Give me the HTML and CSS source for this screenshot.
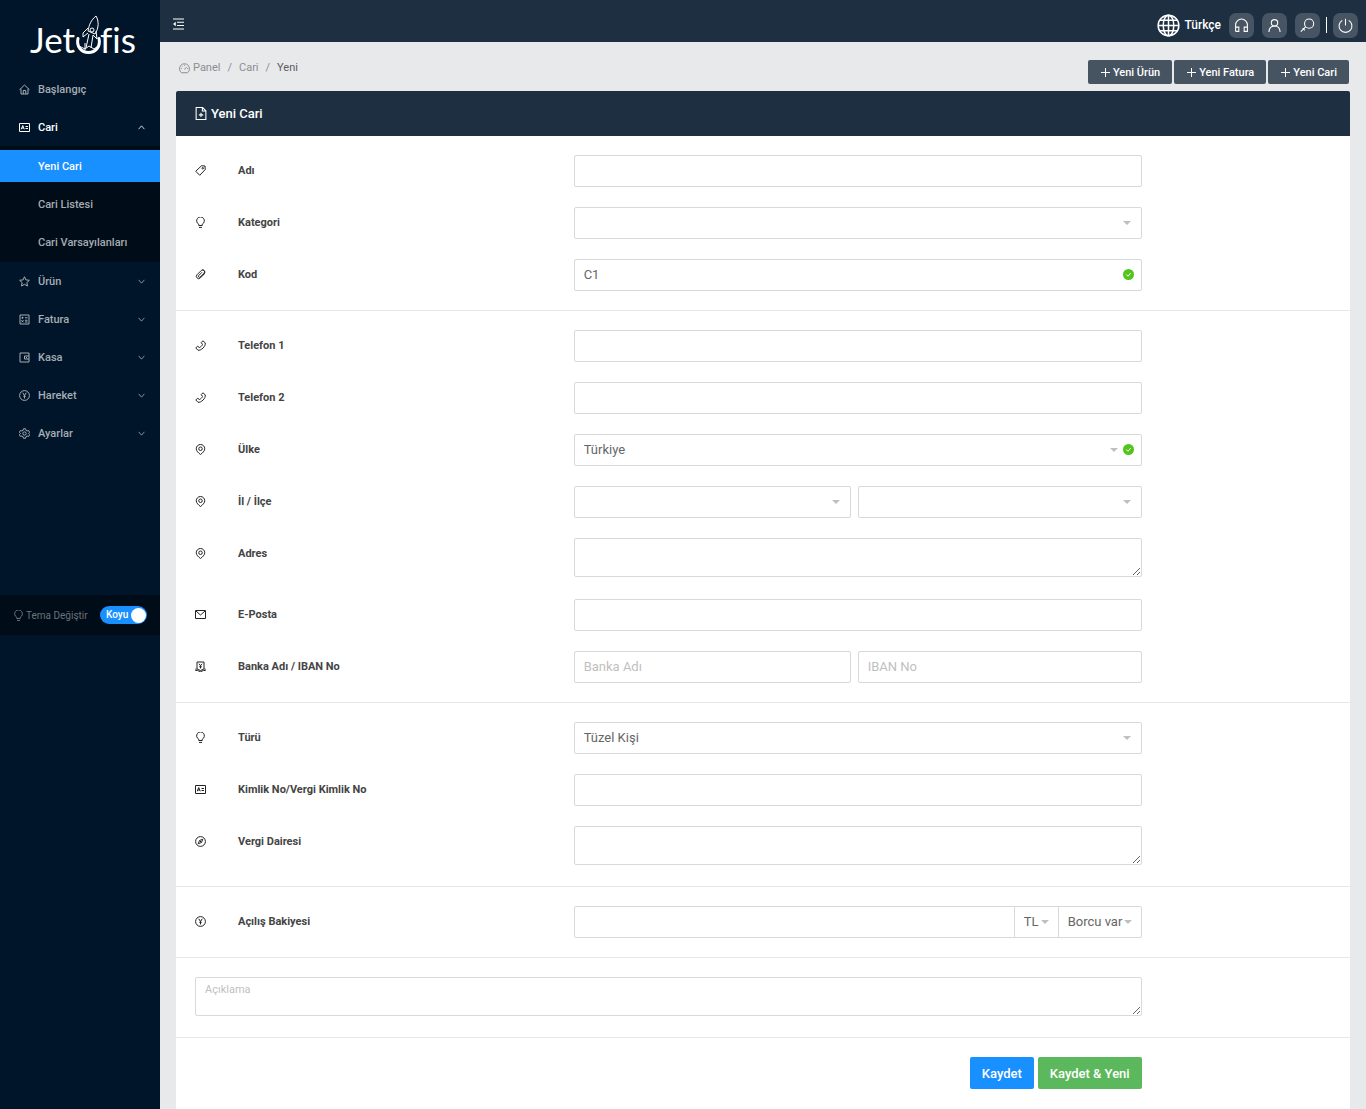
FILE: index.html
```html
<!DOCTYPE html>
<html lang="tr">
<head>
<meta charset="utf-8">
<meta name="viewport" content="width=device-width, initial-scale=1">
<title>Jetofis - Yeni Cari</title>
<link rel="stylesheet" href="styles.css">
</head>
<body>
<svg class="sprite" aria-hidden="true">
  <symbol id="i-home" viewBox="0 0 22 22"><path d="M1 11.500 11 2l10 9.500M4 9.500V20h14V9.500M8.500 20v-7h5v7"/></symbol>
  <symbol id="i-idcard" viewBox="0 0 22 22"><path d="M1 3h20v16H1zM4.500 14.500 7.500 7l3 7.500M5.500 12h4M13 9h5M13 13h5"/></symbol>
  <symbol id="i-star" viewBox="0 0 22 22"><path d="m11 1.500 2.900 6.300 6.800.8-5 4.700 1.300 6.700-6-3.300L5 20l1.300-6.700-5-4.700 6.800-.8z"/></symbol>
  <symbol id="i-sheet" viewBox="0 0 22 22"><path d="M2 2h18v18H2zM5 7.500h4M7 5.500v4M5 12.500l4 4M9 12.500l-4 4M12 7.500h5M12 12.500h5M12 16h5"/></symbol>
  <symbol id="i-wallet" viewBox="0 0 22 22"><path d="M2 2h18v18H2zM20 8h-9v6h9M14 11h2"/></symbol>
  <symbol id="i-yen" viewBox="0 0 22 22"><circle cx="11" cy="11" r="9.800"/><path d="m7.500 5.500 3.500 5.500 3.500-5.500M11 11v6M8.500 12.500h5"/></symbol>
  <symbol id="i-gear" viewBox="0 0 22 22"><path d="M9 1.500h4l.8 3 2.500 1.400 3-.8 2 3.500-2.200 2.400 2.200 2.400-2 3.500-3-.8-2.500 1.400-.8 3H9l-.8-3-2.500-1.400-3 .8-2-3.500L2.900 11 .7 8.600l2-3.500 3 .8 2.500-1.400z"/><circle cx="11" cy="11" r="3.300"/></symbol>
  <symbol id="i-down" viewBox="0 0 22 22"><path d="m4 7 7 8 7-8"/></symbol>
  <symbol id="i-up" viewBox="0 0 22 22"><path d="m4 15 7-8 7 8"/></symbol>
  <symbol id="i-bulb" viewBox="0 0 22 22"><path d="M7.500 17v-2.600a7.700 7.700 0 1 1 7 0V17zM8 20.800h6"/></symbol>
  <symbol id="i-tag" viewBox="0 0 22 22"><path d="m13 1.500 7 .5.500 7L9.500 20.500l-8-8z"/><circle cx="15.500" cy="6.500" r="1.500"/></symbol>
  <symbol id="i-clip" viewBox="0 0 22 22"><path d="m18.500 10-8 8a4.600 4.600 0 0 1-6.500-6.500l8.500-8.500a3.600 3.600 0 0 1 5.500 5.500l-7.500 7.500a2 2 0 0 1-3-3l6.500-6.500M15.500 12.500l4-4.500a4.600 4.600 0 0 0-5-6"/></symbol>
  <symbol id="i-phone" viewBox="0 0 22 22"><path d="m16 1.500 4.500 4.500c.5 3.500-1.200 7-4.500 10.200S9 21 6 20.500L1.500 16 5 12.500l4 2.500c3-1.500 4.800-3.500 6-6L12.500 5z"/></symbol>
  <symbol id="i-pin" viewBox="0 0 22 22"><path d="M11 21c-4-3-8.500-7-8.500-11.500a8.500 8.500 0 0 1 17 0C19.500 14 15 18 11 21z"/><circle cx="11" cy="9.500" r="3.500"/></symbol>
  <symbol id="i-mail" viewBox="0 0 22 22"><path d="M1 3h20v16H1zM2 4l9 8 9-8"/></symbol>
  <symbol id="i-bank" viewBox="0 0 22 22"><path d="M4 2h14v14l-7 3-7-3zM1 19h4l6 2.500 6-2.500h4M2 15v4M20 15v4M8 5.500l3 4 3-4M11 9.500V15M8.500 11.500h5"/></symbol>
  <symbol id="i-compass" viewBox="0 0 22 22"><circle cx="11" cy="11" r="9.800"/><path d="m15.500 6.500-2.500 6.500-6.500 2.500L9 9zM9.500 9.500l3 3"/></symbol>
  <symbol id="i-dash" viewBox="0 0 22 22"><path d="M5 19.500a10 10 0 1 1 12 0zM11 13l4-5M11 3.500v2M3.500 11h2M16.500 11h2M6 6l1 1"/></symbol>
  <symbol id="i-fileadd" viewBox="0 0 22 24"><path d="M2 1h12l6 6v16H2zM13.500 1v6.500H20M11 10.500v8M7 14.500h8"/></symbol>
  <symbol id="i-plus" viewBox="0 0 22 22"><path d="M11 2v18M2 11h18"/></symbol>
  <symbol id="i-headset" viewBox="0 0 28 28"><path d="M3 25V13a11 11 0 0 1 22 0v12h-6v-8h6M3 17h6v8H3"/></symbol>
  <symbol id="i-user" viewBox="0 0 28 28"><circle cx="14" cy="9" r="6"/><path d="M3.500 26c.5-6.500 4.500-11 10.500-11s10 4.500 10.500 11"/></symbol>
  <symbol id="i-search" viewBox="0 0 28 28"><circle cx="17" cy="10.500" r="8.500"/><path d="m10.500 16.500-9 9M5 19l4 4"/></symbol>
  <symbol id="i-power" viewBox="0 0 28 28"><path d="M8 4.500a12 12 0 1 0 12 0M14 1.500V14"/></symbol>
  <symbol id="i-globe" viewBox="0 0 24 24"><circle cx="12" cy="12" r="10.800"/><ellipse cx="12" cy="12" rx="5.500" ry="10.800"/><path d="M12 1v22M1 12h22M3 6.500h18M3 17.500h18"/></symbol>
  <symbol id="i-fold" viewBox="0 0 24 24"><path d="M1 2h22M9 8.500h14M9 15h14M1 22h22"/><path class="solid" d="M6.500 7.500v9L1 12z"/></symbol>
  <symbol id="i-check" viewBox="0 0 22 22"><circle class="dot" cx="11" cy="11" r="11"/><path class="tick" d="m6.500 11 3.500 3.500 5.500-6.500"/></symbol>
</svg>

<div class="layout">
  <aside class="sidebar">
    <a class="logo" href="#" aria-label="Jetofis">
      <svg class="logo-art" width="104" height="46" viewBox="0 0 104 46" aria-hidden="true">
        <text class="logo-text" x="2" y="38">Jet</text>
        <text class="logo-text" x="72" y="38">fis</text>
        <path class="logo-hull" d="M50 23.500c-2 8 3.500 14 10.500 14s12.500-6 10.500-14"/>
        <path class="logo-line" d="M68 1c-5 4-7 9-8 15l7 3c4-6 4-13 1-18zM60 13l-5 5v4l5-4M68 16l1 8-4-4M61 19l-3 14M65 20l-2 13M51 31l6 3 4-3 5 3 4-3M57 28v7"/>
        <circle class="logo-line" cx="64" cy="15" r="2"/>
      </svg>
    </a>
    <nav class="menu">
      <a class="menu-item" href="#"><svg class="icon"><use href="#i-home"/></svg><span>Başlangıç</span></a>
      <a class="menu-item is-open" href="#"><svg class="icon"><use href="#i-idcard"/></svg><span>Cari</span><svg class="icon chevron"><use href="#i-up"/></svg></a>
      <div class="submenu">
        <a class="submenu-item is-active" href="#">Yeni Cari</a>
        <a class="submenu-item" href="#">Cari Listesi</a>
        <a class="submenu-item" href="#">Cari Varsayılanları</a>
      </div>
      <a class="menu-item" href="#"><svg class="icon"><use href="#i-star"/></svg><span>Ürün</span><svg class="icon chevron"><use href="#i-down"/></svg></a>
      <a class="menu-item" href="#"><svg class="icon"><use href="#i-sheet"/></svg><span>Fatura</span><svg class="icon chevron"><use href="#i-down"/></svg></a>
      <a class="menu-item" href="#"><svg class="icon"><use href="#i-wallet"/></svg><span>Kasa</span><svg class="icon chevron"><use href="#i-down"/></svg></a>
      <a class="menu-item" href="#"><svg class="icon"><use href="#i-yen"/></svg><span>Hareket</span><svg class="icon chevron"><use href="#i-down"/></svg></a>
      <a class="menu-item" href="#"><svg class="icon"><use href="#i-gear"/></svg><span>Ayarlar</span><svg class="icon chevron"><use href="#i-down"/></svg></a>
    </nav>
    <div class="theme">
      <svg class="icon"><use href="#i-bulb"/></svg>
      <label class="theme-label" for="theme">Tema Değiştir</label>
      <span class="switch"><input id="theme" type="checkbox" role="switch" checked><span class="switch-text">Koyu</span></span>
    </div>
  </aside>

  <div class="main">
    <header class="topbar">
      <button class="fold" type="button" aria-label="Menü"><svg class="icon"><use href="#i-fold"/></svg></button>
      <div class="tools">
        <a class="language" href="#"><svg class="icon"><use href="#i-globe"/></svg>Türkçe</a>
        <button class="tool" type="button" aria-label="Destek"><svg class="icon"><use href="#i-headset"/></svg></button>
        <button class="tool" type="button" aria-label="Hesap"><svg class="icon"><use href="#i-user"/></svg></button>
        <button class="tool" type="button" aria-label="Ara"><svg class="icon"><use href="#i-search"/></svg></button>
        <span class="tool-split"></span>
        <button class="tool" type="button" aria-label="Çıkış"><svg class="icon"><use href="#i-power"/></svg></button>
      </div>
    </header>

    <main class="content">
      <div class="page-head">
        <nav class="breadcrumb">
          <a href="#"><svg class="icon"><use href="#i-dash"/></svg>Panel</a><span>/</span><a href="#">Cari</a><span>/</span><span class="current">Yeni</span>
        </nav>
        <div class="shortcuts">
          <button class="shortcut" type="button"><svg class="icon"><use href="#i-plus"/></svg>Yeni Ürün</button>
          <button class="shortcut" type="button"><svg class="icon"><use href="#i-plus"/></svg>Yeni Fatura</button>
          <button class="shortcut" type="button"><svg class="icon"><use href="#i-plus"/></svg>Yeni Cari</button>
        </div>
      </div>

      <form class="card">
        <h1 class="card-title"><svg class="icon"><use href="#i-fileadd"/></svg>Yeni Cari</h1>

        <section class="section">
          <div class="row"><label class="label" for="adi"><svg class="icon"><use href="#i-tag"/></svg>Adı</label><input class="control" id="adi" type="text"></div>
          <div class="row"><label class="label" for="kategori"><svg class="icon"><use href="#i-bulb"/></svg>Kategori</label><div class="select"><select class="control" id="kategori"><option></option></select></div></div>
          <div class="row"><label class="label" for="kod"><svg class="icon"><use href="#i-clip"/></svg>Kod</label><div class="valid"><input class="control" id="kod" type="text" value="C1"><svg class="icon check"><use href="#i-check"/></svg></div></div>
        </section>

        <section class="section">
          <div class="row"><label class="label" for="tel1"><svg class="icon"><use href="#i-phone"/></svg>Telefon 1</label><input class="control" id="tel1" type="tel"></div>
          <div class="row"><label class="label" for="tel2"><svg class="icon"><use href="#i-phone"/></svg>Telefon 2</label><input class="control" id="tel2" type="tel"></div>
          <div class="row"><label class="label" for="ulke"><svg class="icon"><use href="#i-pin"/></svg>Ülke</label><div class="select valid"><select class="control" id="ulke"><option>Türkiye</option></select><svg class="icon check"><use href="#i-check"/></svg></div></div>
          <div class="row"><label class="label" for="il"><svg class="icon"><use href="#i-pin"/></svg>İl / İlçe</label>
            <div class="pair"><div class="select"><select class="control" id="il"><option></option></select></div><div class="select"><select class="control" id="ilce" aria-label="İlçe"><option></option></select></div></div></div>
          <div class="row row-tall"><label class="label" for="adres"><svg class="icon"><use href="#i-pin"/></svg>Adres</label><textarea class="control" id="adres"></textarea></div>
          <div class="row"><label class="label" for="eposta"><svg class="icon"><use href="#i-mail"/></svg>E-Posta</label><input class="control" id="eposta" type="email"></div>
          <div class="row"><label class="label" for="banka"><svg class="icon"><use href="#i-bank"/></svg>Banka Adı / IBAN No</label>
            <div class="pair"><input class="control" id="banka" type="text" placeholder="Banka Adı"><input class="control" type="text" aria-label="IBAN No" placeholder="IBAN No"></div></div>
        </section>

        <section class="section">
          <div class="row"><label class="label" for="turu"><svg class="icon"><use href="#i-bulb"/></svg>Türü</label><div class="select"><select class="control" id="turu"><option>Tüzel Kişi</option></select></div></div>
          <div class="row"><label class="label" for="kimlik"><svg class="icon"><use href="#i-idcard"/></svg>Kimlik No/Vergi Kimlik No</label><input class="control" id="kimlik" type="text"></div>
          <div class="row row-tall"><label class="label" for="vergi"><svg class="icon"><use href="#i-compass"/></svg>Vergi Dairesi</label><textarea class="control" id="vergi"></textarea></div>
        </section>

        <section class="section">
          <div class="row"><label class="label" for="bakiye"><svg class="icon"><use href="#i-yen"/></svg>Açılış Bakiyesi</label>
            <div class="group">
              <input class="control" id="bakiye" type="text">
              <div class="select currency"><select class="control" aria-label="Para birimi"><option>TL</option></select></div>
              <div class="select side"><select class="control" aria-label="Borç durumu"><option>Borcu var</option></select></div>
            </div></div>
        </section>

        <section class="section">
          <div class="row row-tall"><textarea class="control note" aria-label="Açıklama" placeholder="Açıklama"></textarea></div>
        </section>

        <section class="section">
          <div class="row"><div class="actions"><button class="btn btn-primary" type="submit">Kaydet</button><button class="btn btn-success" type="button">Kaydet &amp; Yeni</button></div></div>
        </section>
      </form>
    </main>
  </div>
</div>
</body>
</html>
```
FILE: styles.css
```css
* { box-sizing: border-box; }
body { margin: 0; background: #e8e9eb; font-family: Roboto, "Liberation Sans", sans-serif; font-size: 11px; color: #333; }
a { color: inherit; text-decoration: none; }
button, input, select, textarea { font-family: inherit; margin: 0; }
button { border: 0; padding: 0; cursor: pointer; }

.sprite { position: absolute; width: 0; height: 0; }
.icon { width: 11px; height: 11px; flex: none; fill: none; stroke: currentColor; stroke-width: 2; }
.solid { fill: currentColor; stroke: none; }

.layout { display: flex; min-height: 100vh; }

/* Sidebar */
.sidebar { width: 160px; flex: none; background: #001529; color: #a6adb4; }
.logo { display: flex; height: 70px; padding: 15px 0 0 28px; color: #fff; }
.logo-art { overflow: visible; }
.logo-text { font-family: Lato, sans-serif; font-size: 35px; fill: #fff; }
.logo-hull { fill: none; stroke: #fff; stroke-width: 3; stroke-linecap: round; }
.logo-line { fill: none; stroke: #fff; stroke-width: 1; }
.menu { font-weight: 500; }
.menu-item { display: flex; align-items: center; gap: 8px; height: 38px; padding: 0 14px 0 19px; }
.menu-item.is-open { color: #fff; }
.chevron { width: 9px; height: 9px; margin-left: auto; }
.submenu { display: flex; flex-direction: column; gap: 6px; padding: 4px 0; background: #000c17; }
.submenu-item { height: 32px; padding-left: 38px; line-height: 33px; }
.submenu-item.is-active { background: #1890ff; color: #fff; }
.theme { display: flex; align-items: center; height: 40px; margin-top: 143px; padding: 0 13px; background: #000c17; font-size: 10px; color: #6b737a; }
.theme-label { margin-left: 2px; }
.switch { display: grid; width: 47px; height: 18px; margin-left: auto; }
.switch > * { grid-area: 1 / 1; }
.switch input { appearance: none; display: flex; align-items: center; justify-content: flex-end; padding: 0 1px; border-radius: 9px; background: #1890ff; }
.switch input::before { content: ""; width: 15px; height: 15px; border-radius: 50%; background: #fff; }
.switch input:not(:checked) { background: #8c8c8c; justify-content: flex-start; }
.switch-text { padding-left: 6px; line-height: 18px; color: #fff; font-weight: 500; pointer-events: none; }

/* Top bar */
.main { flex: 1; min-width: 0; display: flex; flex-direction: column; }
.topbar { display: flex; align-items: center; justify-content: space-between; height: 42px; padding: 6px 8px 0 12px; background: #1e2f41; color: #fff; }
.fold { display: flex; background: none; color: inherit; }
.fold .icon { width: 13px; height: 12px; }
.tools { display: flex; align-items: center; gap: 8px; padding-top: 2px; }
.language { display: flex; align-items: center; gap: 4px; font-size: 12px; font-weight: 500; }
.language .icon { width: 23px; height: 23px; stroke-width: 1.6; }
.tool { display: grid; place-items: center; width: 25px; height: 25px; border-radius: 7px; background: #475463; color: #fff; }
.tool .icon { width: 15px; height: 15px; }
.tool-split { width: 1px; height: 16px; margin: 0 -2px; background: #fff; }

/* Page head */
.content { flex: 1; display: flex; flex-direction: column; padding: 0 16px; }
.page-head { display: flex; justify-content: space-between; height: 49px; padding: 18px 1px 0 3px; }
.breadcrumb { display: flex; gap: 7px; height: 16px; line-height: 16px; color: #8c8d8f; }
.breadcrumb a { display: flex; align-items: center; gap: 3px; }
.breadcrumb .current { color: #5c5d5e; }
.shortcuts { display: flex; gap: 2px; height: 24px; }
.shortcut { display: flex; align-items: center; gap: 2px; padding: 0 12px; border-radius: 2px; background: #465462; color: #fff; font-size: 11px; font-weight: 500; }

/* Card and form */
.card { flex: 1; background: #fff; border-radius: 2px 2px 0 0; }
.card-title { display: flex; align-items: center; gap: 4px; height: 45px; margin: 0; padding: 0 19px; border-radius: 2px 2px 0 0; background: #1e2f41; color: #fff; font-size: 13px; font-weight: 500; }
.card-title .icon { width: 12px; height: 13px; }
.section { display: grid; gap: 20px; padding: 19px; }
.section + .section { border-top: 1px solid #e8e8e8; }
.row { display: grid; grid-template-columns: 4fr 6fr 2fr; min-height: 32px; }
.row-tall { min-height: 41px; align-items: start; }
.label { display: flex; align-items: center; gap: 32px; height: 30px; font-weight: 700; color: #444; }
.label .icon { color: #222; }
.control { display: block; width: 100%; height: 32px; padding: 0 9px; border: 1px solid #d9d9d9; border-radius: 2px; background: #fff; color: #666; font-size: 13px; outline: 0; }
.control:focus { border-color: #1890ff; }
.control::placeholder { color: #bfbfbf; }
input.control, select.control { padding-bottom: 2px; }
textarea.control { height: 39px; padding: 4px 9px; resize: vertical; }
.note { grid-column: 1 / 3; }
.note.control { padding-top: 5px; font-size: 11px; }
.select, .valid { position: relative; }
.select select { appearance: none; }
.select::after { content: ""; position: absolute; top: 14px; right: 11px; border: 4px solid transparent; border-top-color: #bfbfbf; border-bottom: 0; pointer-events: none; }
.select.valid::after { right: 24px; }
.check { position: absolute; top: 10px; right: 8px; }
.dot { fill: #52c41a; stroke: none; }
.tick { stroke: #fff; }
.pair { display: grid; grid-template-columns: 1fr 50%; }
.pair > :first-child { width: auto; margin-right: 7px; }
.group { display: grid; grid-template-columns: 1fr 44px 83px; }
.group .select { margin-left: -1px; }
.group .select::after { right: 10px; }
.group > .control, .currency .control { border-top-right-radius: 0; border-bottom-right-radius: 0; }
.group .select .control { border-top-left-radius: 0; border-bottom-left-radius: 0; }
.actions { grid-column: 1 / 3; display: flex; justify-content: flex-end; gap: 4px; }
.btn { height: 32px; padding: 0 12px; border-radius: 2px; color: #fff; font-size: 13px; font-weight: 500; }
.btn-primary { background: #1890ff; }
.btn-success { background: #5cb85c; }
```
